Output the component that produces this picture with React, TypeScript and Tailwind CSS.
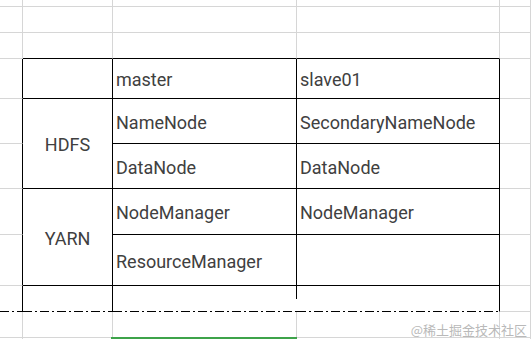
import type { ReactNode } from 'react'

const gray = 'border-[#d6d6d6]'

function Cell({ className = '', children }: { className?: string; children?: ReactNode }) {
  return <div className={`relative flex items-center border-r border-b ${className}`}>{children}</div>
}

function Txt({ children, center }: { children: ReactNode; center?: boolean }) {
  return (
    <span className={`w-full pt-[2px] ${center ? 'text-center' : 'pl-[3px]'} whitespace-nowrap`}>
      {children}
    </span>
  )
}

// page break line under the table (dash-dot)
function Break() {
  return (
    <span className="absolute bottom-[-1px] left-0 right-[-1px] h-px bg-[repeating-linear-gradient(90deg,#000_0_9px,transparent_9px_12px,#000_12px_14px,transparent_14px_17px)]" />
  )
}

export default function App() {
  return (
    <div className="relative h-[339px] w-full overflow-hidden bg-white font-['Roboto',sans-serif] text-[18px] leading-normal text-[#404040]">
      <div className="grid h-full grid-cols-[23px_90px_184px_203px_1fr] grid-rows-[7px_26px_26px_40px_45px_45px_46px_51px_26px_26px_1px]">
        {/* rows above the table */}
        {[0, 1].map((r) =>
          [0, 1, 2, 3, 4].map((c) => <Cell key={`${r}-${c}`} className={gray} />)
        )}
        <Cell className={gray} />
        <Cell className={`${gray} border-b-black`} />
        <Cell className={`${gray} border-b-black`} />
        <Cell className={`${gray} border-b-black`} />
        <Cell className={gray} />

        {/* header */}
        <Cell className={`${gray} border-r-black`} />
        <Cell className="border-black" />
        <Cell className="border-black">
          <Txt>master</Txt>
        </Cell>
        <Cell className="border-black">
          <Txt>slave01</Txt>
        </Cell>
        <Cell className={gray} />

        {/* HDFS */}
        <Cell className={`${gray} border-r-black`} />
        <Cell className="row-span-2 border-black">
          <Txt center>HDFS</Txt>
        </Cell>
        <Cell className="border-black">
          <Txt>NameNode</Txt>
        </Cell>
        <Cell className="border-black">
          <Txt>SecondaryNameNode</Txt>
        </Cell>
        <Cell className={gray} />
        <Cell className={`${gray} border-r-black`} />
        <Cell className="border-black">
          <Txt>DataNode</Txt>
        </Cell>
        <Cell className="border-black">
          <Txt>DataNode</Txt>
        </Cell>
        <Cell className={gray} />

        {/* YARN */}
        <Cell className={`${gray} border-r-black`} />
        <Cell className="row-span-2 border-black">
          <Txt center>YARN</Txt>
        </Cell>
        <Cell className="border-black">
          <Txt>NodeManager</Txt>
        </Cell>
        <Cell className="border-black">
          <Txt>NodeManager</Txt>
        </Cell>
        <Cell className={gray} />
        <Cell className={`${gray} border-r-black`} />
        <Cell className="border-black">
          <Txt>ResourceManager</Txt>
        </Cell>
        <Cell className="border-black" />
        <Cell className={gray} />

        {/* empty row cut by the page break */}
        <Cell className="border-r-black border-b-white">
          <Break />
        </Cell>
        <Cell className="border-r-black border-b-white">
          <Break />
        </Cell>
        <Cell className="border-r-white border-b-white">
          <span className="absolute top-0 right-[-1px] h-[13px] w-px bg-black" />
          <Break />
        </Cell>
        <Cell className="border-r-black border-b-white">
          <Break />
        </Cell>
        <Cell className={gray} />

        {/* below the break */}
        <Cell className={gray} />
        <Cell className={gray} />
        <Cell className={gray}>
          <span className="absolute bottom-[-3px] left-[-2px] right-[-1px] h-[3px] bg-[#3da34a]" />
        </Cell>
        <Cell className={gray} />
        <Cell className={gray} />

        {[0, 1, 2, 3, 4].map((c) => (
          <div key={`last-${c}`} className={`border-r ${gray}`} />
        ))}
      </div>

      <span className="absolute right-[4px] bottom-[3px] font-['Noto_Sans_CJK_SC',sans-serif] text-[13px] leading-none text-[#b9b9b9]">
        @稀土掘金技术社区
      </span>
    </div>
  )
}
